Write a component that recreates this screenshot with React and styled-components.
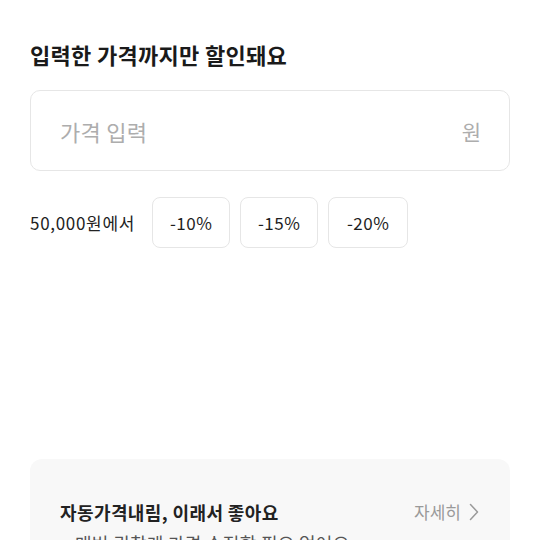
import React from "react";
import styled, { createGlobalStyle } from "styled-components";

const Global = createGlobalStyle`
  html, body { margin: 0; padding: 0; background: #ffffff; }
  body {
    font-family: "Noto Sans CJK KR", "Noto Sans", sans-serif;
    color: #1a1a1a;
    -webkit-font-smoothing: antialiased;
  }
  * { box-sizing: border-box; }
`;

const Page = styled.div`
  padding: 40px 30px 0;
  width: 540px;
  height: 540px;
  overflow: hidden;
`;

const Title = styled.h2`
  margin: 0;
  font-size: 22px;
  line-height: 28px;
  font-weight: 700;
  letter-spacing: 0.3px;
  color: #1a1a1a;
`;

const InputBox = styled.label`
  margin-top: 22px;
  height: 81px;
  border: 1px solid #e6e6e6;
  border-radius: 10px;
  display: flex;
  align-items: center;
  justify-content: space-between;
  padding: 0 28px 0 29px;
`;

const PriceInput = styled.input`
  border: none;
  outline: none;
  background: transparent;
  font-family: inherit;
  font-size: 22px;
  color: #1a1a1a;
  flex: 1;
  padding: 0;
  letter-spacing: 0.3px;
  &::placeholder { color: #adadad; }
`;

const Unit = styled.span`
  font-size: 21px;
  color: #adadad;
`;

const Row = styled.div`
  margin-top: 26px;
  display: flex;
  align-items: center;
`;

const BaseLabel = styled.span`
  font-size: 17px;
  color: #222;
  letter-spacing: 0.7px;
  margin-right: 17px;
`;

const Chips = styled.div`
  display: flex;
  gap: 10px;
`;

const Chip = styled.button`
  width: ${(p) => p.$w}px;
  height: 51px;
  border: 1px solid #e6e6e6;
  border-radius: 8px;
  background: #fff;
  font-family: inherit;
  font-size: 17px;
  letter-spacing: 0.5px;
  color: #1e1e1e;
  padding: 0;
`;

const Card = styled.section`
  margin-top: 211px;
  background: #f8f8f8;
  border-radius: 12px;
  padding: 40px 30px 24px;
`;

const CardHead = styled.div`
  display: flex;
  align-items: center;
  justify-content: space-between;
`;

const CardTitle = styled.h3`
  margin: 0;
  font-size: 18px;
  line-height: 24px;
  font-weight: 700;
  letter-spacing: 0.4px;
  color: #222;
`;

const More = styled.span`
  display: flex;
  align-items: center;
  gap: 8px;
  font-size: 17px;
  color: #9a9a9a;
  margin-right: 1px;
`;

const List = styled.ul`
  margin: 7px 0 0;
  padding: 0;
  list-style: none;
`;

const Item = styled.li`
  font-size: 18px;
  line-height: 24px;
  color: #555;
  display: flex;
  gap: 8px;
  letter-spacing: 0.3px;
  &::before { content: "·"; width: 7px; }
`;

export default function App() {
  return (
    <>
      <Global />
      <Page>
        <Title>입력한 가격까지만 할인돼요</Title>
        <InputBox>
          <PriceInput placeholder="가격 입력" />
          <Unit>원</Unit>
        </InputBox>
        <Row>
          <BaseLabel>50,000원에서</BaseLabel>
          <Chips>
            <Chip $w={78}>-10%</Chip>
            <Chip $w={78}>-15%</Chip>
            <Chip $w={80}>-20%</Chip>
          </Chips>
        </Row>
        <Card>
          <CardHead>
            <CardTitle>자동가격내림, 이래서 좋아요</CardTitle>
            <More>
              자세히
              <svg width="10" height="18" viewBox="0 0 10 18" fill="none">
                <path d="M1.5 1.5 L8.5 9 L1.5 16.5" stroke="#9a9a9a" strokeWidth="1.5" strokeLinecap="round" strokeLinejoin="round" />
              </svg>
            </More>
          </CardHead>
          <List>
            <Item>매번 귀찮게 가격 수정할 필요 없어요</Item>
          </List>
        </Card>
      </Page>
    </>
  );
}
